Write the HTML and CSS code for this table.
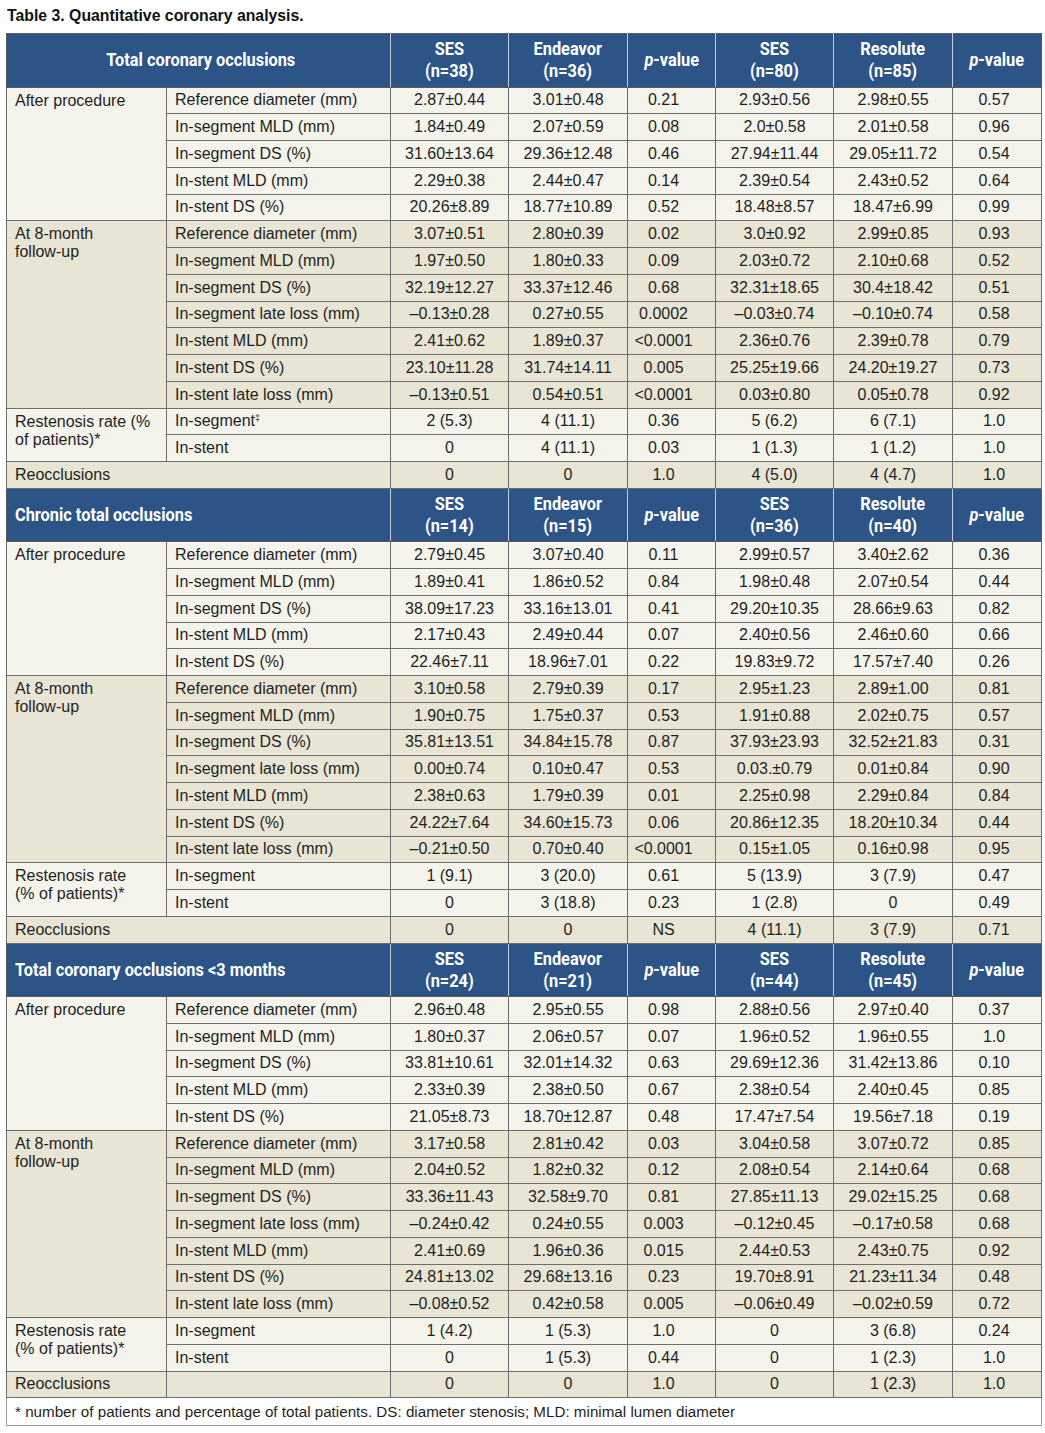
FILE: index.html
```html
<!DOCTYPE html>
<html lang="en">
<head>
<meta charset="utf-8">
<title>Table 3. Quantitative coronary analysis.</title>
<link rel="stylesheet" href="styles.css">
</head>
<body>
<h1 class="title"><span class="sx">Table 3. Quantitative coronary analysis.</span></h1>
<table class="qca">
  <colgroup>
    <col class="c-group"><col class="c-param"><col class="c-val"><col class="c-val2"><col class="c-p"><col class="c-val"><col class="c-val2"><col class="c-p2">
  </colgroup>

  <tr class="head">
    <th colspan="2" class="sect center"><span class="sx">Total coronary occlusions</span></th>
    <th><span class="sx">SES<br>(n=38)</span></th><th><span class="sx">Endeavor<br>(n=36)</span></th><th><span class="sx"><i>p</i>-value</span></th>
    <th><span class="sx">SES<br>(n=80)</span></th><th><span class="sx">Resolute<br>(n=85)</span></th><th><span class="sx"><i>p</i>-value</span></th>
  </tr>
  <tr class="light"><td rowspan="5" class="grp">After procedure</td><td class="par">Reference diameter (mm)</td><td>2.87±0.44</td><td>3.01±0.48</td><td class="p">0.21</td><td>2.93±0.56</td><td>2.98±0.55</td><td class="p2">0.57</td></tr>
  <tr class="light"><td class="par">In-segment MLD (mm)</td><td>1.84±0.49</td><td>2.07±0.59</td><td class="p">0.08</td><td>2.0±0.58</td><td>2.01±0.58</td><td class="p2">0.96</td></tr>
  <tr class="light"><td class="par">In-segment DS (%)</td><td>31.60±13.64</td><td>29.36±12.48</td><td class="p">0.46</td><td>27.94±11.44</td><td>29.05±11.72</td><td class="p2">0.54</td></tr>
  <tr class="light"><td class="par">In-stent MLD (mm)</td><td>2.29±0.38</td><td>2.44±0.47</td><td class="p">0.14</td><td>2.39±0.54</td><td>2.43±0.52</td><td class="p2">0.64</td></tr>
  <tr class="light"><td class="par">In-stent DS (%)</td><td>20.26±8.89</td><td>18.77±10.89</td><td class="p">0.52</td><td>18.48±8.57</td><td>18.47±6.99</td><td class="p2">0.99</td></tr>
  <tr class="dark"><td rowspan="7" class="grp">At 8-month<br>follow-up</td><td class="par">Reference diameter (mm)</td><td>3.07±0.51</td><td>2.80±0.39</td><td class="p">0.02</td><td>3.0±0.92</td><td>2.99±0.85</td><td class="p2">0.93</td></tr>
  <tr class="dark"><td class="par">In-segment MLD (mm)</td><td>1.97±0.50</td><td>1.80±0.33</td><td class="p">0.09</td><td>2.03±0.72</td><td>2.10±0.68</td><td class="p2">0.52</td></tr>
  <tr class="dark"><td class="par">In-segment DS (%)</td><td>32.19±12.27</td><td>33.37±12.46</td><td class="p">0.68</td><td>32.31±18.65</td><td>30.4±18.42</td><td class="p2">0.51</td></tr>
  <tr class="dark"><td class="par">In-segment late loss (mm)</td><td>–0.13±0.28</td><td>0.27±0.55</td><td class="p">0.0002</td><td>–0.03±0.74</td><td>–0.10±0.74</td><td class="p2">0.58</td></tr>
  <tr class="dark"><td class="par">In-stent MLD (mm)</td><td>2.41±0.62</td><td>1.89±0.37</td><td class="p">&lt;0.0001</td><td>2.36±0.76</td><td>2.39±0.78</td><td class="p2">0.79</td></tr>
  <tr class="dark"><td class="par">In-stent DS (%)</td><td>23.10±11.28</td><td>31.74±14.11</td><td class="p">0.005</td><td>25.25±19.66</td><td>24.20±19.27</td><td class="p2">0.73</td></tr>
  <tr class="dark"><td class="par">In-stent late loss (mm)</td><td>–0.13±0.51</td><td>0.54±0.51</td><td class="p">&lt;0.0001</td><td>0.03±0.80</td><td>0.05±0.78</td><td class="p2">0.92</td></tr>
  <tr class="light"><td rowspan="2" class="grp">Restenosis rate (%<br>of patients)*</td><td class="par">In-segment<sup>‡</sup></td><td>2 (5.3)</td><td>4 (11.1)</td><td class="p">0.36</td><td>5 (6.2)</td><td>6 (7.1)</td><td class="p2">1.0</td></tr>
  <tr class="light"><td class="par">In-stent</td><td>0</td><td>4 (11.1)</td><td class="p">0.03</td><td>1 (1.3)</td><td>1 (1.2)</td><td class="p2">1.0</td></tr>
  <tr class="dark"><td colspan="2" class="grp single">Reocclusions</td><td>0</td><td>0</td><td class="p">1.0</td><td>4 (5.0)</td><td>4 (4.7)</td><td class="p2">1.0</td></tr>

  <tr class="head">
    <th colspan="2" class="sect"><span class="sx">Chronic total occlusions</span></th>
    <th><span class="sx">SES<br>(n=14)</span></th><th><span class="sx">Endeavor<br>(n=15)</span></th><th><span class="sx"><i>p</i>-value</span></th>
    <th><span class="sx">SES<br>(n=36)</span></th><th><span class="sx">Resolute<br>(n=40)</span></th><th><span class="sx"><i>p</i>-value</span></th>
  </tr>
  <tr class="light"><td rowspan="5" class="grp">After procedure</td><td class="par">Reference diameter (mm)</td><td>2.79±0.45</td><td>3.07±0.40</td><td class="p">0.11</td><td>2.99±0.57</td><td>3.40±2.62</td><td class="p2">0.36</td></tr>
  <tr class="light"><td class="par">In-segment MLD (mm)</td><td>1.89±0.41</td><td>1.86±0.52</td><td class="p">0.84</td><td>1.98±0.48</td><td>2.07±0.54</td><td class="p2">0.44</td></tr>
  <tr class="light"><td class="par">In-segment DS (%)</td><td>38.09±17.23</td><td>33.16±13.01</td><td class="p">0.41</td><td>29.20±10.35</td><td>28.66±9.63</td><td class="p2">0.82</td></tr>
  <tr class="light"><td class="par">In-stent MLD (mm)</td><td>2.17±0.43</td><td>2.49±0.44</td><td class="p">0.07</td><td>2.40±0.56</td><td>2.46±0.60</td><td class="p2">0.66</td></tr>
  <tr class="light"><td class="par">In-stent DS (%)</td><td>22.46±7.11</td><td>18.96±7.01</td><td class="p">0.22</td><td>19.83±9.72</td><td>17.57±7.40</td><td class="p2">0.26</td></tr>
  <tr class="dark"><td rowspan="7" class="grp">At 8-month<br>follow-up</td><td class="par">Reference diameter (mm)</td><td>3.10±0.58</td><td>2.79±0.39</td><td class="p">0.17</td><td>2.95±1.23</td><td>2.89±1.00</td><td class="p2">0.81</td></tr>
  <tr class="dark"><td class="par">In-segment MLD (mm)</td><td>1.90±0.75</td><td>1.75±0.37</td><td class="p">0.53</td><td>1.91±0.88</td><td>2.02±0.75</td><td class="p2">0.57</td></tr>
  <tr class="dark"><td class="par">In-segment DS (%)</td><td>35.81±13.51</td><td>34.84±15.78</td><td class="p">0.87</td><td>37.93±23.93</td><td>32.52±21.83</td><td class="p2">0.31</td></tr>
  <tr class="dark"><td class="par">In-segment late loss (mm)</td><td>0.00±0.74</td><td>0.10±0.47</td><td class="p">0.53</td><td>0.03.±0.79</td><td>0.01±0.84</td><td class="p2">0.90</td></tr>
  <tr class="dark"><td class="par">In-stent MLD (mm)</td><td>2.38±0.63</td><td>1.79±0.39</td><td class="p">0.01</td><td>2.25±0.98</td><td>2.29±0.84</td><td class="p2">0.84</td></tr>
  <tr class="dark"><td class="par">In-stent DS (%)</td><td>24.22±7.64</td><td>34.60±15.73</td><td class="p">0.06</td><td>20.86±12.35</td><td>18.20±10.34</td><td class="p2">0.44</td></tr>
  <tr class="dark"><td class="par">In-stent late loss (mm)</td><td>–0.21±0.50</td><td>0.70±0.40</td><td class="p">&lt;0.0001</td><td>0.15±1.05</td><td>0.16±0.98</td><td class="p2">0.95</td></tr>
  <tr class="light"><td rowspan="2" class="grp">Restenosis rate<br>(% of patients)*</td><td class="par">In-segment</td><td>1 (9.1)</td><td>3 (20.0)</td><td class="p">0.61</td><td>5 (13.9)</td><td>3 (7.9)</td><td class="p2">0.47</td></tr>
  <tr class="light"><td class="par">In-stent</td><td>0</td><td>3 (18.8)</td><td class="p">0.23</td><td>1 (2.8)</td><td>0</td><td class="p2">0.49</td></tr>
  <tr class="dark"><td colspan="2" class="grp single">Reocclusions</td><td>0</td><td>0</td><td class="p">NS</td><td>4 (11.1)</td><td>3 (7.9)</td><td class="p2">0.71</td></tr>

  <tr class="head">
    <th colspan="2" class="sect"><span class="sx">Total coronary occlusions &lt;3 months</span></th>
    <th><span class="sx">SES<br>(n=24)</span></th><th><span class="sx">Endeavor<br>(n=21)</span></th><th><span class="sx"><i>p</i>-value</span></th>
    <th><span class="sx">SES<br>(n=44)</span></th><th><span class="sx">Resolute<br>(n=45)</span></th><th><span class="sx"><i>p</i>-value</span></th>
  </tr>
  <tr class="light"><td rowspan="5" class="grp">After procedure</td><td class="par">Reference diameter (mm)</td><td>2.96±0.48</td><td>2.95±0.55</td><td class="p">0.98</td><td>2.88±0.56</td><td>2.97±0.40</td><td class="p2">0.37</td></tr>
  <tr class="light"><td class="par">In-segment MLD (mm)</td><td>1.80±0.37</td><td>2.06±0.57</td><td class="p">0.07</td><td>1.96±0.52</td><td>1.96±0.55</td><td class="p2">1.0</td></tr>
  <tr class="light"><td class="par">In-segment DS (%)</td><td>33.81±10.61</td><td>32.01±14.32</td><td class="p">0.63</td><td>29.69±12.36</td><td>31.42±13.86</td><td class="p2">0.10</td></tr>
  <tr class="light"><td class="par">In-stent MLD (mm)</td><td>2.33±0.39</td><td>2.38±0.50</td><td class="p">0.67</td><td>2.38±0.54</td><td>2.40±0.45</td><td class="p2">0.85</td></tr>
  <tr class="light"><td class="par">In-stent DS (%)</td><td>21.05±8.73</td><td>18.70±12.87</td><td class="p">0.48</td><td>17.47±7.54</td><td>19.56±7.18</td><td class="p2">0.19</td></tr>
  <tr class="dark"><td rowspan="7" class="grp">At 8-month<br>follow-up</td><td class="par">Reference diameter (mm)</td><td>3.17±0.58</td><td>2.81±0.42</td><td class="p">0.03</td><td>3.04±0.58</td><td>3.07±0.72</td><td class="p2">0.85</td></tr>
  <tr class="dark"><td class="par">In-segment MLD (mm)</td><td>2.04±0.52</td><td>1.82±0.32</td><td class="p">0.12</td><td>2.08±0.54</td><td>2.14±0.64</td><td class="p2">0.68</td></tr>
  <tr class="dark"><td class="par">In-segment DS (%)</td><td>33.36±11.43</td><td>32.58±9.70</td><td class="p">0.81</td><td>27.85±11.13</td><td>29.02±15.25</td><td class="p2">0.68</td></tr>
  <tr class="dark"><td class="par">In-segment late loss (mm)</td><td>–0.24±0.42</td><td>0.24±0.55</td><td class="p">0.003</td><td>–0.12±0.45</td><td>–0.17±0.58</td><td class="p2">0.68</td></tr>
  <tr class="dark"><td class="par">In-stent MLD (mm)</td><td>2.41±0.69</td><td>1.96±0.36</td><td class="p">0.015</td><td>2.44±0.53</td><td>2.43±0.75</td><td class="p2">0.92</td></tr>
  <tr class="dark"><td class="par">In-stent DS (%)</td><td>24.81±13.02</td><td>29.68±13.16</td><td class="p">0.23</td><td>19.70±8.91</td><td>21.23±11.34</td><td class="p2">0.48</td></tr>
  <tr class="dark"><td class="par">In-stent late loss (mm)</td><td>–0.08±0.52</td><td>0.42±0.58</td><td class="p">0.005</td><td>–0.06±0.49</td><td>–0.02±0.59</td><td class="p2">0.72</td></tr>
  <tr class="light"><td rowspan="2" class="grp">Restenosis rate<br>(% of patients)*</td><td class="par">In-segment</td><td>1 (4.2)</td><td>1 (5.3)</td><td class="p">1.0</td><td>0</td><td>3 (6.8)</td><td class="p2">0.24</td></tr>
  <tr class="light"><td class="par">In-stent</td><td>0</td><td>1 (5.3)</td><td class="p">0.44</td><td>0</td><td>1 (2.3)</td><td class="p2">1.0</td></tr>
  <tr class="dark"><td class="grp single">Reocclusions</td><td class="par"></td><td>0</td><td>0</td><td class="p">1.0</td><td>0</td><td>1 (2.3)</td><td class="p2">1.0</td></tr>

  <tr class="foot"><td colspan="8">* number of patients and percentage of total patients. DS: diameter stenosis; MLD: minimal lumen diameter</td></tr>
</table>
</body>
</html>
```
FILE: styles.css
```css
html, body {
  background: #ffffff;
}
body {
  margin: 0;
  padding: 4px 5px 6px 6px;
  font-family: "Liberation Sans", Arial, sans-serif;
  color: #1f1f1f;
}
.sx {
  display: inline-block;
  transform-origin: center center;
}
.title {
  margin: 0 0 6px 1px;
  font-family: "Liberation Sans", Arial, sans-serif;
  font-weight: bold;
  font-size: 17px;
  line-height: 23px;
  color: #111;
  white-space: nowrap;
}
.title .sx {
  transform: scaleX(0.93);
  transform-origin: left center;
}
.qca {
  border-collapse: collapse;
  table-layout: fixed;
  width: 1034px;
  font-size: 16px;
}
.c-group { width: 160px; }
.c-param { width: 224px; }
.c-val { width: 118px; }
.c-val2 { width: 119px; }
.c-p { width: 88px; }
.c-p2 { width: 89px; }
.qca td {
  border: 1px solid #6e6e6e;
  height: 25.76px;
  padding: 0 4px;
  line-height: 18px;
  text-align: center;
  vertical-align: middle;
  white-space: nowrap;
}
.qca tr.light td { background: #f4f3ec; }
.qca tr.dark td { background: #e8e5d4; }
.qca td.grp {
  text-align: left;
  vertical-align: top;
  padding: 4px 8px 0 8px;
}
.qca td.grp.single {
  vertical-align: middle;
  padding-top: 0;
}
.qca td.par {
  text-align: left;
  padding-left: 8px;
}
.qca td.p { padding-right: 20px; }
.qca td.p2 { padding-right: 10px; }
.qca sup {
  font-size: 9px;
  line-height: 0;
  vertical-align: 5px;
}
.qca tr.head th {
  height: 52.5px;
  background: #2d5487;
  color: #ffffff;
  font-family: Roboto, "Liberation Sans", sans-serif;
  font-weight: 700;
  font-size: 19px;
  line-height: 22px;
  padding: 0 4px;
  text-align: center;
  vertical-align: middle;
  white-space: nowrap;
  border-top: 1px solid #5a5a5a;
  border-bottom: 1px solid #5a5a5a;
  border-left: 1px solid #c4ccd8;
  border-right: 1px solid #c4ccd8;
}
.qca tr.head th .sx {
  transform: scaleX(0.86);
}
.qca tr.head th:first-child { border-left: 1px solid #5a5a5a; }
.qca tr.head th:last-child { border-right: 1px solid #5a5a5a; }
.qca tr.head th.sect {
  text-align: left;
  padding-left: 8px;
}
.qca tr.head th.sect .sx {
  transform-origin: left center;
}
.qca tr.head th.sect.center {
  text-align: center;
}
.qca tr.head th.sect.center .sx {
  transform-origin: center center;
}
.qca tr.foot td {
  background: #ffffff;
  text-align: left;
  height: 27px;
  padding: 0 8px;
  font-size: 15.2px;
  border: 1px solid #9a9a9a;
  vertical-align: middle;
}
```
